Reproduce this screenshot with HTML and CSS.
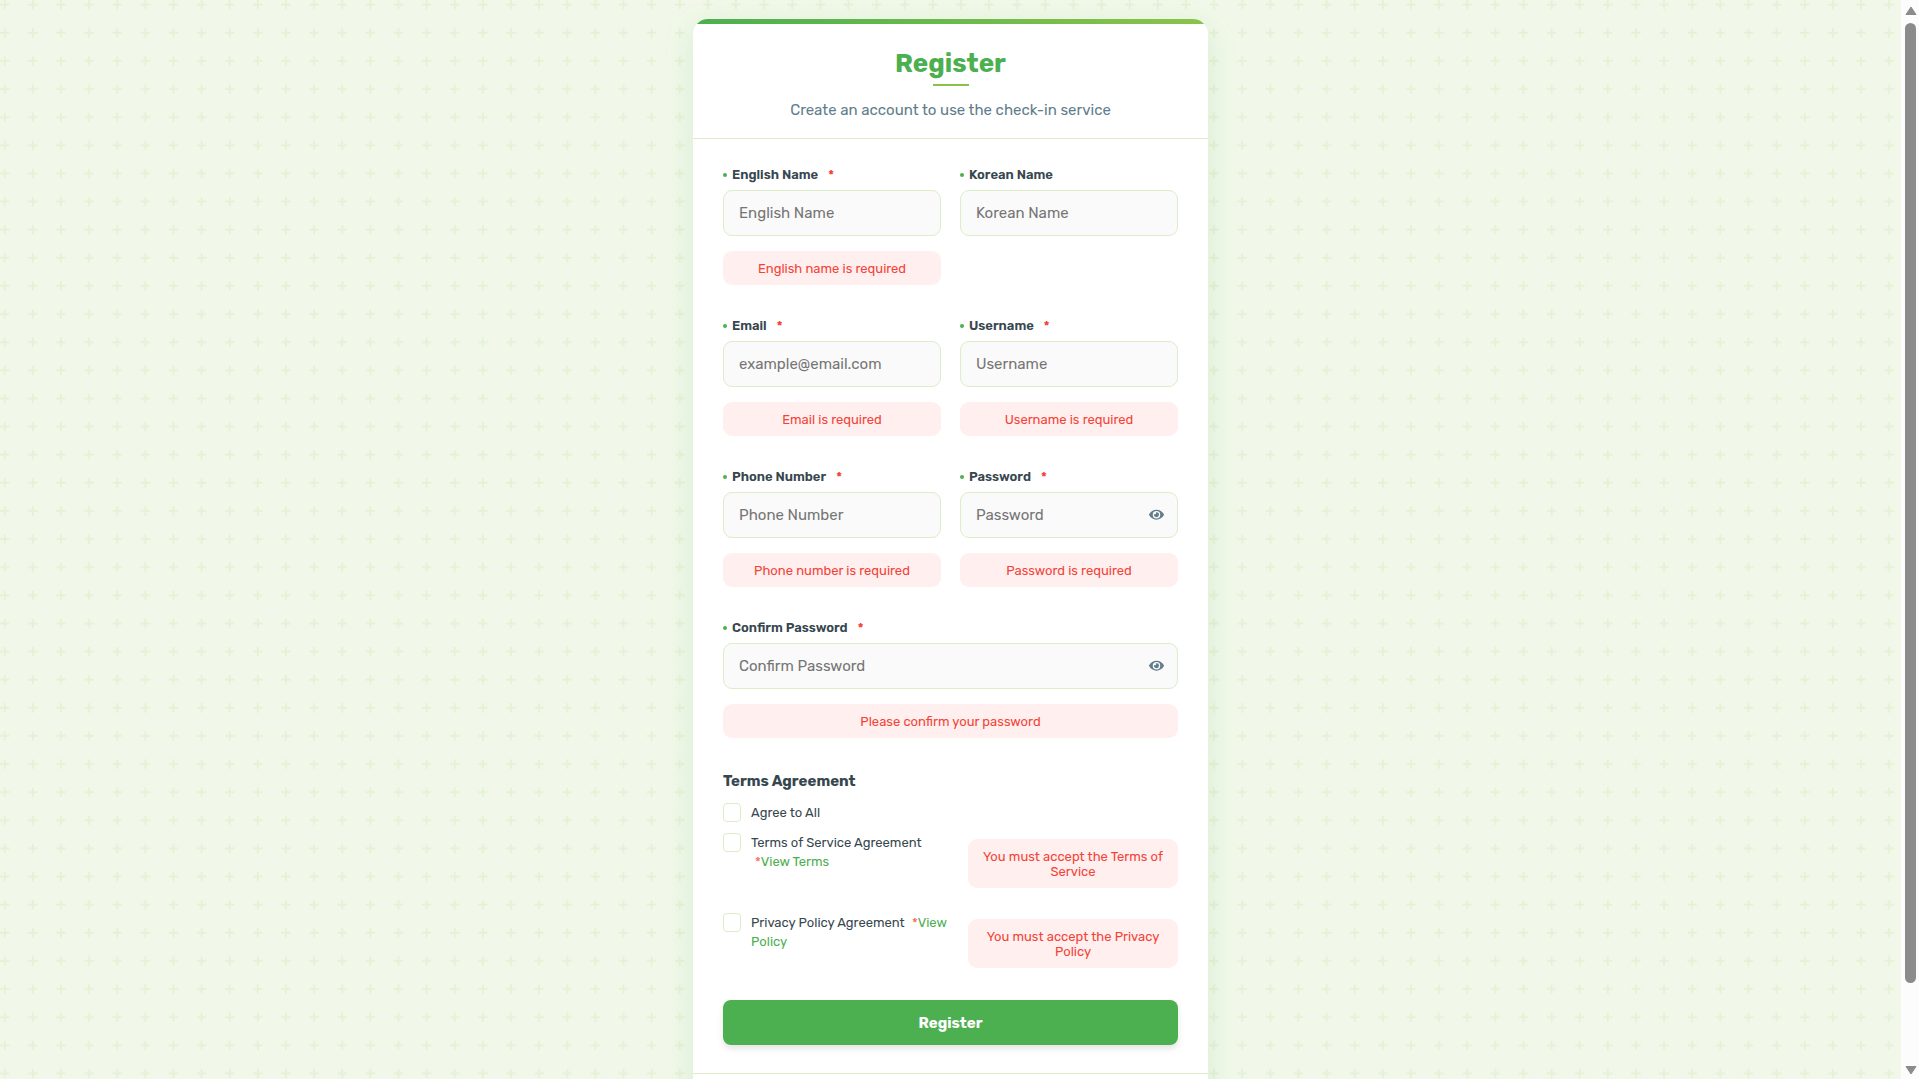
FILE: index.html
```html
<!DOCTYPE html>
<html lang="en">
<head>
<meta charset="utf-8">
<meta name="viewport" content="width=device-width, initial-scale=1">
<title>Register</title>
<link rel="stylesheet" href="styles.css">
</head>
<body>
<div class="shell">
  <main class="page">
    <section class="card">
      <header class="card-header">
        <h1 class="title">Register</h1>
        <p class="subtitle">Create an account to use the check-in service</p>
      </header>
      <form class="form" novalidate>
        <div class="fields">
          <div class="field">
            <label class="label" for="english-name">English Name <span class="required">*</span></label>
            <input class="input" id="english-name" type="text" placeholder="English Name">
            <p class="error">English name is required</p>
          </div>
          <div class="field">
            <label class="label" for="korean-name">Korean Name</label>
            <input class="input" id="korean-name" type="text" placeholder="Korean Name">
          </div>
          <div class="field">
            <label class="label" for="email">Email <span class="required">*</span></label>
            <input class="input" id="email" type="email" placeholder="example@email.com">
            <p class="error">Email is required</p>
          </div>
          <div class="field">
            <label class="label" for="username">Username <span class="required">*</span></label>
            <input class="input" id="username" type="text" placeholder="Username">
            <p class="error">Username is required</p>
          </div>
          <div class="field">
            <label class="label" for="phone">Phone Number <span class="required">*</span></label>
            <input class="input" id="phone" type="tel" placeholder="Phone Number">
            <p class="error">Phone number is required</p>
          </div>
          <div class="field">
            <label class="label" for="password">Password <span class="required">*</span></label>
            <div class="password">
              <input class="input" id="password" type="password" placeholder="Password">
              <button class="reveal" type="button" aria-label="Show password">
                <svg class="eye" viewBox="0 0 576 512" aria-hidden="true"><path d="M572.52 241.4C518.29 135.59 410.93 64 288 64S57.68 135.64 3.48 241.41a32.35 32.35 0 0 0 0 29.19C57.71 376.41 165.07 448 288 448s230.32-71.64 284.52-177.41a32.35 32.35 0 0 0 0-29.19zM288 400a144 144 0 1 1 144-144 143.93 143.93 0 0 1-144 144zm0-240a95.31 95.31 0 0 0-25.31 3.79 47.85 47.85 0 0 1-66.9 66.9A95.78 95.78 0 1 0 288 160z"/></svg>
              </button>
            </div>
            <p class="error">Password is required</p>
          </div>
          <div class="field field-wide">
            <label class="label" for="confirm">Confirm Password <span class="required">*</span></label>
            <div class="password">
              <input class="input" id="confirm" type="password" placeholder="Confirm Password">
              <button class="reveal" type="button" aria-label="Show password confirmation">
                <svg class="eye" viewBox="0 0 576 512" aria-hidden="true"><path d="M572.52 241.4C518.29 135.59 410.93 64 288 64S57.68 135.64 3.48 241.41a32.35 32.35 0 0 0 0 29.19C57.71 376.41 165.07 448 288 448s230.32-71.64 284.52-177.41a32.35 32.35 0 0 0 0-29.19zM288 400a144 144 0 1 1 144-144 143.93 143.93 0 0 1-144 144zm0-240a95.31 95.31 0 0 0-25.31 3.79 47.85 47.85 0 0 1-66.9 66.9A95.78 95.78 0 1 0 288 160z"/></svg>
              </button>
            </div>
            <p class="error">Please confirm your password</p>
          </div>
        </div>

        <section class="terms">
          <h2 class="terms-title">Terms Agreement</h2>
          <div class="term">
            <input class="check" id="agree-all" type="checkbox">
            <label class="term-text" for="agree-all">Agree to All</label>
          </div>
          <div class="term term-checked">
            <input class="check" id="agree-terms" type="checkbox">
            <div class="term-text"><label for="agree-terms">Terms of Service Agreement</label> <span class="star">*</span><a class="link" href="#terms">View Terms</a></div>
            <p class="error term-error">You must accept the Terms of Service</p>
          </div>
          <div class="term term-checked">
            <input class="check" id="agree-privacy" type="checkbox">
            <div class="term-text"><label for="agree-privacy">Privacy Policy Agreement</label> <span class="star">*</span><a class="link" href="#privacy">View Policy</a></div>
            <p class="error term-error">You must accept the Privacy Policy</p>
          </div>
        </section>

        <button class="submit" type="submit">Register</button>
      </form>
      <footer class="card-footer"></footer>
    </section>
  </main>
  <div class="scrollbar" aria-hidden="true">
    <svg class="arrow" viewBox="0 0 12 10"><path d="M6 1 11 8.500H1z"/></svg>
    <div class="thumb"></div>
    <svg class="arrow" viewBox="0 0 12 10"><path d="M6 9 1 1.500h10z"/></svg>
  </div>
</div>
</body>
</html>
```
FILE: styles.css
```css
* {
  box-sizing: border-box;
}

body {
  margin: 0;
  font-family: Rubik, Inter, "Noto Sans CJK KR", sans-serif;
  font-size: 15px;
  color: #37474f;
}

h1, h2, p {
  margin: 0;
}

.shell {
  display: grid;
  grid-template-columns: minmax(0, 1fr) 18px;
  height: 100vh;
}

.page {
  overflow-y: auto;
  scrollbar-width: none;
  padding: 19px;
  background-color: #f1f8e9;
  background-image: url("data:image/svg+xml,%3Csvg xmlns='http://www.w3.org/2000/svg' width='225' height='225' viewBox='0 0 240 240'%3E%3Cdefs%3E%3Cpattern id='p' width='30' height='30' patternUnits='userSpaceOnUse'%3E%3Cpath d='M6 4V0H4v4H0v2h4v4h2V6h4V4z' fill='%238bc34a' fill-opacity='.12'/%3E%3C/pattern%3E%3C/defs%3E%3Crect width='240' height='240' fill='url(%23p)'/%3E%3C/svg%3E");
  background-size: 225px 225px;
}

.card {
  max-width: 515px;
  margin: 0 auto;
  background: #fff;
  border-radius: 15px;
  box-shadow: 0 8px 30px rgba(76, 175, 80, 0.15);
  overflow: hidden;
}

.card-header {
  padding: 27px 30px 18px;
  text-align: center;
  border-bottom: 1px solid #dcedc8;
  background: linear-gradient(90deg, #4caf50, #8bc34a) top / 100% 5px no-repeat;
}

.title {
  font-size: 26px;
  line-height: 36px;
  font-weight: 700;
  color: #4caf50;
}

.title::after {
  content: "";
  display: block;
  width: 36px;
  height: 2px;
  margin: 2px auto 0;
  background: #8bc34a;
}

.subtitle {
  margin-top: 14px;
  line-height: 20px;
  color: #607d8b;
}

.form {
  padding: 27px 30px 28px;
}

.fields {
  display: grid;
  grid-template-columns: 1fr 1fr;
  gap: 32px 19px;
}

.field-wide {
  grid-column: 1 / -1;
}

.label {
  display: flex;
  align-items: center;
  height: 17px;
  margin-bottom: 7px;
  font-size: 13px;
  font-weight: 600;
}

.label::before {
  content: "";
  width: 4px;
  height: 4px;
  margin-right: 5px;
  border-radius: 50%;
  background: #4caf50;
}

.required {
  margin-left: 10px;
  color: #f44336;
}

.input {
  display: block;
  width: 100%;
  height: 46px;
  padding: 0 15px;
  font: inherit;
  color: inherit;
  background: #fafafa;
  border: 1px solid #dcedc8;
  border-radius: 9px;
}

.input::placeholder {
  color: #757575;
}

.password {
  position: relative;
}

.reveal {
  position: absolute;
  inset: 0 14px 0 auto;
  padding: 0;
  border: 0;
  background: none;
}

.eye {
  display: block;
  width: 15px;
  fill: #607d8b;
}

.error {
  margin-top: 15px;
  padding: 10px 9px 9px;
  font-size: 13px;
  line-height: 15px;
  text-align: center;
  color: #f44336;
  background: #ffefef;
  border-radius: 9px;
}

.terms {
  margin-top: 33px;
}

.terms-title {
  margin-bottom: 12px;
  font-size: 15px;
  line-height: 20px;
  font-weight: 700;
}

.term {
  display: grid;
  grid-template-columns: 18px minmax(0, 1fr);
  column-gap: 10px;
  align-items: start;
  margin-bottom: 11px;
}

.term-checked {
  grid-template-columns: 18px minmax(0, 1fr) 210px;
  margin-bottom: 25px;
}

.check {
  appearance: none;
  width: 18px;
  height: 19px;
  margin: 0;
  background: #fff;
  border: 1px solid #dcedc8;
  border-radius: 4px;
}

.term-text {
  font-size: 13px;
  line-height: 19px;
}

.star {
  margin-left: 4px;
  color: #f44336;
  opacity: 0.8;
}

.link {
  color: #4caf50;
  text-decoration: none;
}

.term-error {
  margin-top: 6px;
}

.submit {
  display: block;
  width: 100%;
  height: 45px;
  margin-top: 32px;
  font: inherit;
  font-weight: 700;
  color: #fff;
  background: #4caf50;
  border: 0;
  border-radius: 8px;
  box-shadow: 0 4px 6px rgba(0, 0, 0, 0.1);
}

.card-footer {
  height: 60px;
  border-top: 1px solid #dcedc8;
}

.scrollbar {
  display: flex;
  flex-direction: column;
  align-items: center;
  padding: 6px 0 4px 1px;
  background: #fcfcfc;
}

.arrow {
  width: 12px;
  height: 10px;
  fill: #8b8b8b;
  stroke: #8b8b8b;
  stroke-linejoin: round;
}

.thumb {
  flex: 1;
  width: 11px;
  margin: 7px 0 82px;
  border-radius: 6px;
  background: #8b8b8b;
}
```
